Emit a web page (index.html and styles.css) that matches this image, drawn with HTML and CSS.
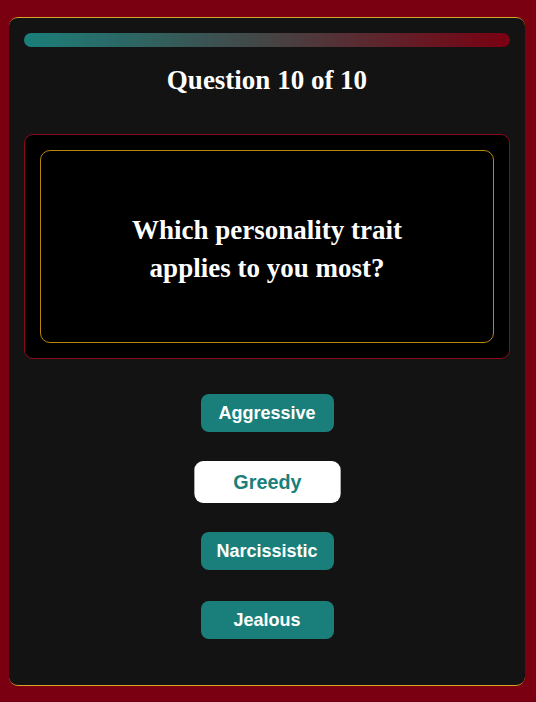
FILE: index.html
```html
<!DOCTYPE html>
<html lang="en">
<head>
<meta charset="utf-8">
<title>Quiz</title>
<link rel="stylesheet" href="styles.css">
</head>
<body>
  <main class="card">
    <div class="progress"><div class="progress-fill"></div></div>
    <h1 class="title">Question 10 of 10</h1>
    <section class="question-outer">
      <div class="question-inner">
        <p class="question-text">Which personality trait<br>applies to you most?</p>
      </div>
    </section>
    <div class="answers">
      <button class="answer">Aggressive</button>
      <button class="answer answer-active">Greedy</button>
      <button class="answer">Narcissistic</button>
      <button class="answer">Jealous</button>
    </div>
  </main>
</body>
</html>
```
FILE: styles.css
```css
html, body {
  margin: 0;
  padding: 0;
}
body {
  background: #7a0011;
  height: 702px;
  padding-top: 17px;
  box-sizing: border-box;
}
.card {
  margin-left: 9px;
  width: 516px;
  height: 669px;
  box-sizing: border-box;
  background: #131313;
  border-top: 1px solid #d9a22a;
  border-bottom: 1px solid #d9a22a;
  border-radius: 9px;
  padding: 15px 15px 0;
  display: flex;
  flex-direction: column;
}
.progress {
  height: 14px;
  border-radius: 7px;
  overflow: hidden;
}
.progress-fill {
  height: 100%;
  width: 100%;
  background: linear-gradient(90deg, #1a7f7a 0%, #454545 50%, #7a0011 100%);
}
.title {
  margin: 17px 0 38px;
  text-align: center;
  font-family: "Liberation Serif", serif;
  font-weight: bold;
  font-size: 27px;
  line-height: 32px;
  color: #ffffff;
}
.question-outer {
  background: #000000;
  border: 1px solid #8a0a18;
  border-radius: 9px;
  padding: 15px;
}
.question-inner {
  border: 1px solid #b8860b;
  border-radius: 10px;
  height: 193px;
  box-sizing: border-box;
  display: flex;
  align-items: center;
  justify-content: center;
}
.question-text {
  margin: 0;
  padding-top: 4px;
  text-align: center;
  font-family: "Liberation Serif", serif;
  font-weight: bold;
  font-size: 27px;
  line-height: 38px;
  color: #ffffff;
}
.answers {
  margin-top: 35px;
  display: flex;
  flex-direction: column;
  align-items: center;
  gap: 31px;
}
.answer {
  width: 133px;
  height: 38px;
  border: none;
  border-radius: 8px;
  background: #1a7f7a;
  color: #ffffff;
  font-family: "Liberation Sans", Arial, sans-serif;
  font-weight: bold;
  font-size: 18px;
  padding: 0;
}
.answer-active {
  background: #ffffff;
  color: #1a7f7a;
  transform: scale(1.1);
}
```
